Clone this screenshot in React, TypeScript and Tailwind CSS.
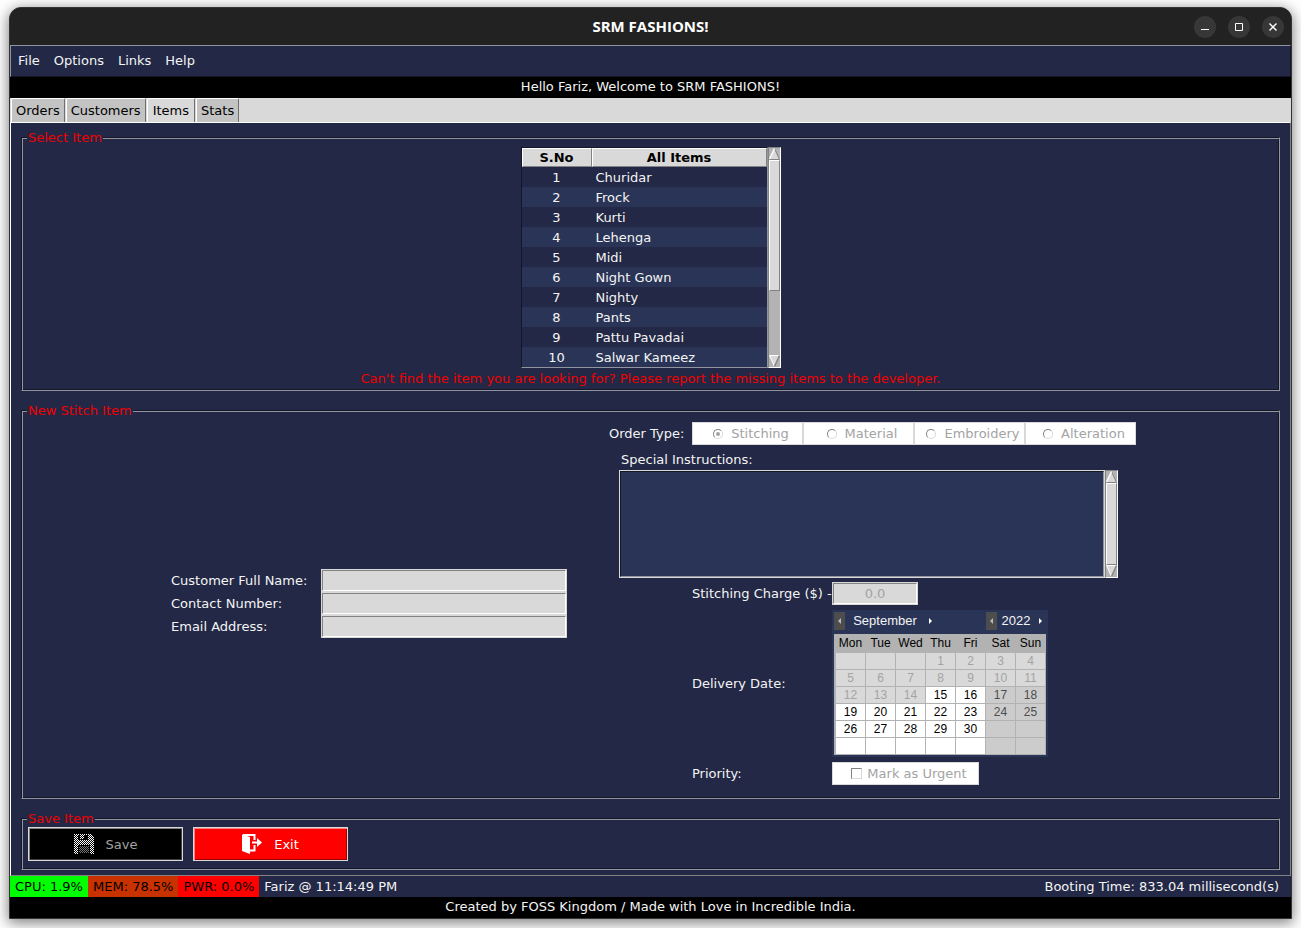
import React from "react";

const labelFont = "font-['DejaVu_Sans',sans-serif]";

const items = [
  "Churidar", "Frock", "Kurti", "Lehenga", "Midi",
  "Night Gown", "Nighty", "Pants", "Pattu Pavadai", "Salwar Kameez",
];

const orderTypes = ["Stitching", "Material", "Embroidery", "Alteration"];
const weekdays = ["Mon", "Tue", "Wed", "Thu", "Fri", "Sat", "Sun"];
const firstOffset = 3;
const today = 15;

function Scrollbar({ share }: { share: "part" | "full" }) {
  return (
    <div
      aria-hidden="true"
      className="flex w-[13px] shrink-0 flex-col border border-t-[#828282] border-l-[#828282] border-r-white border-b-white bg-[#b3b3b3]"
    >
      <svg width="11" height="12" viewBox="0 0 11 12" className="shrink-0">
        <path d="M5.5 0.5 L10.5 11 H0.5 Z" fill="#d9d9d9" />
        <path d="M5.5 0.5 L10.5 11.5 H0.5" stroke="#828282" fill="none" />
        <path d="M5.5 0.5 L0.5 11" stroke="#fff" strokeWidth="1.4" fill="none" />
      </svg>
      <div
        className={
          "border border-t-white border-l-white border-r-[#828282] border-b-[#828282] bg-[#d9d9d9] " +
          (share === "part" ? "h-[131px]" : "flex-1")
        }
      />
      {share === "part" && <div className="flex-1" />}
      <svg width="11" height="12" viewBox="0 0 11 12" className="shrink-0">
        <path d="M5.5 11.5 L10.5 0.5 H0.5 Z" fill="#d9d9d9" />
        <path d="M5.5 11.5 L0.5 0.5 H10.5" stroke="#fff" fill="none" />
        <path d="M5.5 11.5 L10.5 0.5" stroke="#828282" strokeWidth="1.4" fill="none" />
      </svg>
    </div>
  );
}

function Group({ title, className, children }: { title: string; className?: string; children: React.ReactNode }) {
  return (
    <fieldset
      className={
        "border border-t-[#131726] border-l-[#131726] border-r-[#9295a0] border-b-[#9295a0] shadow-[inset_1px_1px_0_#9295a0,inset_-1px_-1px_0_#131726] " +
        (className ?? "")
      }
    >
      <legend className="ml-[5px] bg-[#222845] px-px leading-[17px] text-[#f00000]">{title}</legend>
      {children}
    </fieldset>
  );
}

function Entry({ id, label }: { id: string; label: string }) {
  return (
    <div className="flex h-[23px] items-center">
      <label htmlFor={id} className="w-[150px]">{label}</label>
      <div className="flex h-[23px] w-[246px] border border-[#d9d9d9]">
        <input
          id={id}
          type="text"
          className="min-w-0 flex-1 border border-t-[#828282] border-l-[#828282] border-r-white border-b-white bg-[#d9d9d9] px-1 text-black outline-none"
        />
      </div>
    </div>
  );
}

function Arrow({ dir }: { dir: "left" | "right" }) {
  return (
    <svg width="3" height="6" viewBox="0 0 3 6">
      <path d={dir === "left" ? "M3 0 V6 L0 3 Z" : "M0 0 V6 L3 3 Z"} fill={dir === "left" ? "#b8b8b8" : "#fff"} />
    </svg>
  );
}

function dayStyle(col: number, day: number) {
  if (day < today) return "bg-[#d9d9d9] text-[#a3a3a3]";
  if (col > 4) return "bg-[#cccccc] text-[#4d4d4d]";
  return "bg-white text-black";
}

function Calendar() {
  return (
    <div className="w-[216px] bg-[#2a3457] p-[2px] font-['Liberation_Sans',sans-serif] text-[12px]">
      <div className="flex h-[22px] items-start text-[13px] leading-[18px]">
        <button type="button" aria-label="Previous month" className="flex h-[18px] w-[11px] items-center justify-center bg-[#4d4d4d]"><Arrow dir="left" /></button>
        <span className="w-[80px] text-center">September</span>
        <button type="button" aria-label="Next month" className="flex h-[18px] w-[11px] items-center justify-center"><Arrow dir="right" /></button>
        <button type="button" aria-label="Previous year" className="ml-auto flex h-[18px] w-[11px] items-center justify-center bg-[#4d4d4d]"><Arrow dir="left" /></button>
        <span className="w-[38px] text-center">2022</span>
        <button type="button" aria-label="Next year" className="flex h-[18px] w-[11px] items-center justify-center"><Arrow dir="right" /></button>
      </div>
      <table className="w-full table-fixed border-separate border-spacing-px border-l border-[#b2b2b2] bg-[#b2b2b2] text-center text-black">
        <thead>
          <tr>{weekdays.map((d) => <th key={d} className="h-[17px] p-0 leading-[17px] font-normal">{d}</th>)}</tr>
        </thead>
        <tbody>
          {[0, 1, 2, 3, 4, 5].map((row) => (
            <tr key={row}>
              {weekdays.map((d, col) => {
                const day = row * 7 + col - firstOffset + 1;
                return (
                  <td key={d} className={"h-[16px] p-0 leading-[16px] " + dayStyle(col, day)}>
                    {day > 0 && day <= 30 ? day : ""}
                  </td>
                );
              })}
            </tr>
          ))}
        </tbody>
      </table>
    </div>
  );
}

function SaveIcon() {
  return (
    <svg width="20" height="20" viewBox="0 0 20 20" shapeRendering="crispEdges">
      <defs>
        <pattern id="stipple" width="2" height="2" patternUnits="userSpaceOnUse">
          <rect width="1" height="1" fill="#fff" />
          <rect x="1" y="1" width="1" height="1" fill="#fff" />
        </pattern>
        <pattern id="stipple-dim" width="2" height="2" patternUnits="userSpaceOnUse">
          <rect width="1" height="1" fill="#777" />
          <rect x="1" y="1" width="1" height="1" fill="#777" />
        </pattern>
      </defs>
      <path
        fill="url(#stipple)"
        fillRule="evenodd"
        d="M0 0 H16 L20 4 V20 H0 Z M4 1 V6 H14 V1 Z M4 11 V20 H16 V11 Z"
      />
      <path fill="url(#stipple)" d="M6 1 H10 V5 H6 Z" />
      <path fill="url(#stipple-dim)" d="M5 12 H15 V19 H5 Z" />
    </svg>
  );
}

function ExitIcon() {
  return (
    <svg width="20" height="20" viewBox="0 0 20 20" fill="none">
      <path d="M0 0.5 L8 3 V20 L0 17 Z" fill="#fff" />
      <path d="M1 1 H12.5 V6 M12.5 11 V16.5 H8" stroke="#fff" strokeWidth="2" />
      <path d="M10 7.5 H15 V4 L20 8.5 L15 13 V9.5 H10 Z" fill="#fff" />
    </svg>
  );
}

export default function App() {
  return (
    <div className={"flex min-h-screen flex-col bg-white px-[9px] pt-[7px] pb-[9px] text-[13px] leading-[17px] text-[#f4f4f4] " + labelFont}>
      <div className="flex flex-1 flex-col rounded-t-[12px] border border-[#333333] bg-[#222845] shadow-[0_3px_14px_1px_rgba(0,0,0,0.5)]">
        <header className="grid h-[37px] grid-cols-[1fr_auto_1fr] items-center rounded-t-[11px] bg-[#222222]">
          <h1 className="col-start-2 font-['Open_Sans',sans-serif] text-[15px] font-bold text-white">SRM FASHIONS!</h1>
          <div className="mr-[7px] flex gap-[12px] justify-self-end">
            <button type="button" aria-label="Minimize" className="flex size-[22px] items-center justify-center rounded-full bg-[#373737]">
              <svg width="8" height="8" viewBox="0 0 8 8"><path d="M0 6.5 H8" stroke="#fff" /></svg>
            </button>
            <button type="button" aria-label="Maximize" className="flex size-[22px] items-center justify-center rounded-full bg-[#373737]">
              <svg width="8" height="8" viewBox="0 0 8 8"><path d="M0.5 0.5 H7.5 V7.5 H0.5 Z" stroke="#fff" fill="none" /></svg>
            </button>
            <button type="button" aria-label="Close" className="flex size-[22px] items-center justify-center rounded-full bg-[#373737]">
              <svg width="8" height="8" viewBox="0 0 8 8"><path d="M0.5 0.5 L7.5 7.5 M7.5 0.5 L0.5 7.5" stroke="#fff" strokeWidth="1.4" /></svg>
            </button>
          </div>
        </header>

        <nav className="flex h-[32px] items-center gap-[14px] border border-t-[#9295a0] border-l-[#9295a0] border-r-[#131726] border-b-[#131726] px-[7px] pb-[2px]">
          {["File", "Options", "Links", "Help"].map((m) => (
            <button key={m} type="button">{m}</button>
          ))}
        </nav>

        <p className="h-[21px] bg-black text-center leading-[20px]">Hello Fariz, Welcome to SRM FASHIONS!</p>

        <div role="tablist" className="flex h-[24px] gap-px bg-[#d9d9d9] pl-px text-black">
          {["Orders", "Customers", "Items", "Stats"].map((t) => (
            <button
              key={t}
              type="button"
              role="tab"
              aria-selected={t === "Items"}
              className={
                "rounded-t-[2px] border-t border-r border-l border-t-white border-l-white border-r-[#6f6f6f] " +
                (t === "Items" ? "bg-[#d9d9d9] px-[5px]" : "bg-[#c3c3c3] px-[4px]")
              }
            >
              {t}
            </button>
          ))}
        </div>

        <main className="flex flex-1 flex-col border border-t-white border-l-white border-r-[#828282] border-b-[#828282] px-[10px] pt-[6px] pb-[5px]">
          <Group title="Select Item">
            <div className="flex flex-col items-center pt-px">
              <div className="flex">
                <div className="border border-t-[#131726] border-l-[#131726] border-r-[#9295a0] border-b-[#9295a0]">
                  <table className="border-separate border-spacing-0">
                    <thead>
                      <tr className="text-black">
                        <th className="h-[19px] w-[70px] border border-t-white border-l-white border-r-[#828282] border-b-[#828282] bg-[#d9d9d9] p-0 font-bold">S.No</th>
                        <th className="h-[19px] w-[175px] border border-t-white border-l-white border-r-[#828282] border-b-[#828282] bg-[#d9d9d9] p-0 font-bold">All Items</th>
                      </tr>
                    </thead>
                    <tbody>
                      {items.map((name, i) => (
                        <tr key={name} className={i % 2 ? "bg-[#2a3457]" : ""}>
                          <td className="h-[20px] p-0 text-center">{i + 1}</td>
                          <td className="h-[20px] p-0 pl-1">{name}</td>
                        </tr>
                      ))}
                    </tbody>
                  </table>
                </div>
                <Scrollbar share="part" />
              </div>
              <p className="pt-[2px] pb-[3px] text-[#f00000]">
                Can't find the item you are looking for? Please report the missing items to the developer.
              </p>
            </div>
          </Group>

          <Group title="New Stitch Item" className="mt-[11px] flex-1">
            <div className="flex items-center justify-center gap-[42px] pt-[3px] pl-[6px]">
              <div>
                <Entry id="name" label="Customer Full Name:" />
                <Entry id="phone" label="Contact Number:" />
                <Entry id="email" label="Email Address:" />
              </div>

              <div className="w-[527px]">
                <div className="flex items-center">
                  <span id="order-type" className="w-[83px]">Order Type:</span>
                  <div role="radiogroup" aria-labelledby="order-type" className="flex">
                    {orderTypes.map((t, i) => (
                      <label key={t} className="flex h-[23px] w-[111px] items-center justify-center gap-[8px] border border-[#d9d9d9] bg-white pl-[7px] text-[#a3a3a3]">
                        <input
                          type="radio"
                          name="order-type"
                          disabled
                          defaultChecked={i === 0}
                          className="flex size-[10px] shrink-0 appearance-none items-center justify-center rounded-full border border-t-[#828282] border-l-[#828282] border-r-[#d9d9d9] border-b-[#d9d9d9] bg-white checked:before:size-1 checked:before:rounded-full checked:before:bg-[#a3a3a3]"
                        />
                        {t}
                      </label>
                    ))}
                  </div>
                </div>

                <div className="pt-[5px] pl-[10px]">
                  <label htmlFor="notes" className="block h-[20px] pl-[2px] leading-[20px]">Special Instructions:</label>
                  <div className="flex w-[499px]">
                    <div className="flex flex-1 border border-[#d9d9d9]">
                      <textarea
                        id="notes"
                        className="h-[106px] flex-1 resize-none border border-t-[#131726] border-l-[#131726] border-r-[#9295a0] border-b-[#9295a0] bg-[#2a3457] p-1 outline-none"
                      />
                    </div>
                    <Scrollbar share="full" />
                  </div>
                </div>

                <div className="flex flex-col gap-[5px] pt-[4px] pl-[83px]">
                  <div className="flex items-center">
                    <label htmlFor="charge" className="w-[140px]">Stitching Charge ($) -</label>
                    <div className="flex h-[23px] w-[86px] border border-[#d9d9d9]">
                      <input
                        id="charge"
                        type="text"
                        disabled
                        defaultValue="0.0"
                        className="min-w-0 flex-1 border border-t-[#828282] border-l-[#828282] border-r-white border-b-white bg-[#d9d9d9] text-center text-[#a3a3a3] outline-none"
                      />
                    </div>
                  </div>
                  <div className="flex items-center">
                    <span className="w-[140px]">Delivery Date:</span>
                    <Calendar />
                  </div>
                  <div className="flex items-center">
                    <span className="w-[140px]">Priority:</span>
                    <label className="flex h-[23px] w-[147px] items-center justify-center gap-[5px] border border-[#d9d9d9] bg-white pl-[7px] text-[#a3a3a3]">
                      <input
                        type="checkbox"
                        disabled
                        className="size-[11px] shrink-0 appearance-none border border-t-[#828282] border-l-[#828282] border-r-[#d9d9d9] border-b-[#d9d9d9] bg-white"
                      />
                      Mark as Urgent
                    </label>
                  </div>
                </div>
              </div>
            </div>
          </Group>

          <Group title="Save Item" className="mt-[11px]">
            <div className="flex gap-[10px] px-[6px] pb-[8px]">
              <button type="button" disabled className="flex h-[34px] w-[155px] items-center justify-center gap-[12px] border border-[#d9d9d9] bg-black text-[#a3a3a3] shadow-[inset_1px_1px_0_#7f7f7f,inset_-1px_-1px_0_#404040]">
                <SaveIcon />
                Save
              </button>
              <button type="button" className="flex h-[34px] w-[155px] items-center justify-center gap-[12px] border border-[#d9d9d9] bg-[#ff0000] text-white shadow-[inset_1px_1px_0_#ff7f7f,inset_-1px_-1px_0_#990000]">
                <ExitIcon />
                Exit
              </button>
            </div>
          </Group>
        </main>

        <div className="flex h-[21px] items-center leading-[21px]">
          <span className="bg-[#00ff00] px-[5px] text-black">CPU: 1.9%</span>
          <span className="bg-[#c83200] px-[5px] text-black">MEM: 78.5%</span>
          <span className="bg-[#ff0000] px-[5px] text-black">PWR: 0.0%</span>
          <span className="px-[5px]">Fariz @ 11:14:49 PM</span>
          <span className="ml-auto pr-[12px]">Booting Time: 833.04 millisecond(s)</span>
        </div>
        <footer className="h-[21px] bg-black text-center leading-[20px]">
          Created by FOSS Kingdom / Made with Love in Incredible India.
        </footer>
      </div>
    </div>
  );
}
